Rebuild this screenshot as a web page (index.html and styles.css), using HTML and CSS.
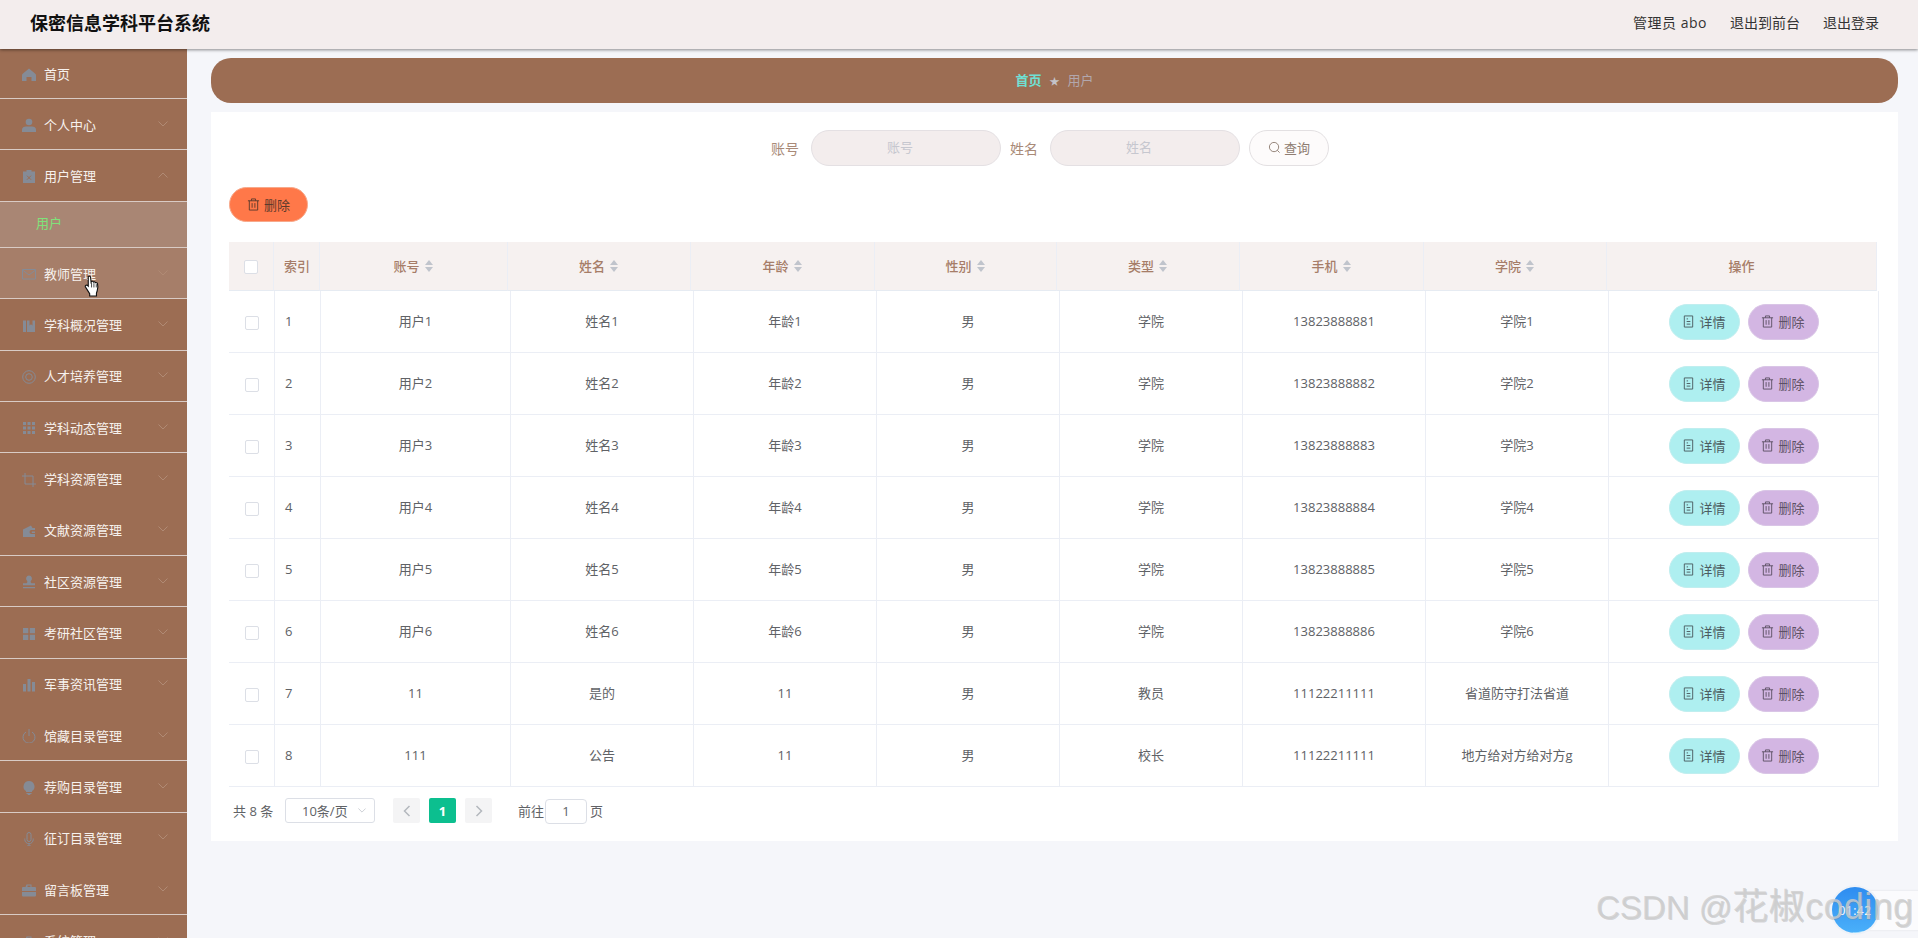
FILE: index.html
```html
<!DOCTYPE html>
<html lang="zh">
<head>
<meta charset="utf-8">
<title>保密信息学科平台系统</title>
<link rel="stylesheet" href="styles.css">
</head>
<body>
<svg class="defs" aria-hidden="true">
  <symbol id="i-chev" viewBox="0 0 10 6"><path d="M.5.5 5 5 9.500.5" fill="none" stroke="currentColor"/></symbol>
  <symbol id="i-chev-up" viewBox="0 0 10 6"><path d="M.5 5.500 5 1l4.500 4.500" fill="none" stroke="currentColor"/></symbol>
  <symbol id="i-trash" viewBox="0 0 14 14"><path d="M1 3h12M4.800 3V1h4.400v2M2.500 3v10h9V3M5.500 5.500v5M8.500 5.500v5" fill="none" stroke="currentColor" stroke-width="1"/></symbol>
  <symbol id="i-doc" viewBox="0 0 14 14"><path d="M2.500 1h9v12h-9zM5 7h4M5 9.800h4M5 4.200h1.500" fill="none" stroke="currentColor" stroke-width="1"/></symbol>
  <symbol id="i-search" viewBox="0 0 14 14"><circle cx="6.500" cy="6.500" r="5" fill="none" stroke="currentColor"/><path d="m10 10 2.500 2.500" stroke="currentColor"/></symbol>
</svg>

<header class="topbar">
  <div class="brand">保密信息学科平台系统</div>
  <nav class="toplinks">
    <span class="admin">管理员 abo</span>
    <span>退出到前台</span>
    <span>退出登录</span>
  </nav>
</header>

<div class="shell">
  <aside class="sidebar">
    <div class="menu-item first">
      <svg class="mi" viewBox="0 0 14 14"><path d="M7 1.500 13 6.500c.6.500 1 1 1 2V14H9.500V10h-5v4H0V8.500c0-1 .4-1.500 1-2z"/></svg>
      <span>首页</span>
    </div>
    <div class="menu-item">
      <svg class="mi" viewBox="0 0 14 14"><circle cx="7" cy="4" r="3.300"/><path d="M0 11.500C0 9.500 2 8.500 4 8.500h6c2 0 4 1 4 3V14H0z"/></svg>
      <span>个人中心</span><svg class="chev"><use href="#i-chev"/></svg>
    </div>
    <div class="menu-item open">
      <svg class="mi" viewBox="0 0 14 14"><path d="M1 2.500h3.500V1h5v1.500H13V14H1z"/><path d="m5 6.700 4 4M9 6.700l-4 4" stroke="#9c6d53" fill="none"/></svg>
      <span>用户管理</span><svg class="chev"><use href="#i-chev-up"/></svg>
    </div>
    <div class="submenu-item">用户</div>
    <div class="menu-item hovered">
      <svg class="mi" viewBox="0 0 14 14"><path d="M.5 2.500h13v9.500H.5zM.5 3 7 8l6.500-5" fill="none" stroke="currentColor"/></svg>
      <span>教师管理</span><svg class="chev"><use href="#i-chev"/></svg>
    </div>
    <div class="menu-item">
      <svg class="mi" viewBox="0 0 14 14"><path d="M1 1.500h3V13H1zM5 1.500h2.500v5l1.500-1.200 1.500 1.200v-5H13V13H5z"/></svg>
      <span>学科概况管理</span><svg class="chev"><use href="#i-chev"/></svg>
    </div>
    <div class="menu-item">
      <svg class="mi" viewBox="0 0 14 14"><circle cx="7" cy="7" r="6.300" fill="none" stroke="currentColor"/><circle cx="7" cy="7" r="3.300" fill="none" stroke="currentColor"/></svg>
      <span>人才培养管理</span><svg class="chev"><use href="#i-chev"/></svg>
    </div>
    <div class="menu-item">
      <svg class="mi" viewBox="0 0 14 14"><path d="M1 1h3v3H1zM5.500 1h3v3h-3zM10 1h3v3h-3zM1 5.500h3v3H1zM5.500 5.500h3v3h-3zM10 5.500h3v3h-3zM1 10h3v3H1zM5.500 10h3v3h-3zM10 10h3v3h-3z"/></svg>
      <span>学科动态管理</span><svg class="chev"><use href="#i-chev"/></svg>
    </div>
    <div class="menu-item plain">
      <svg class="mi" viewBox="0 0 14 14"><path d="M3 0v11h11M0 3h11v11" fill="none" stroke="currentColor"/></svg>
      <span>学科资源管理</span><svg class="chev"><use href="#i-chev"/></svg>
    </div>
    <div class="menu-item">
      <svg class="mi" viewBox="0 0 14 14"><path d="M1 5.500 9 1.500l1.500 2.500H13v2H9.500a2 2 0 0 0 0 4H13v3H1zM9.800 7.500H13v1.500H9.800z"/></svg>
      <span>文献资源管理</span><svg class="chev"><use href="#i-chev"/></svg>
    </div>
    <div class="menu-item">
      <svg class="mi" viewBox="0 0 14 14"><path d="M7 .500a3 3 0 0 1 2 5.200c-.5.500-.5 1.500 0 2l.5.500H13v2H1V8.200h3.500l.5-.5c.5-.5.5-1.500 0-2A3 3 0 0 1 7 .500zM1 12h12v1.300H1z"/></svg>
      <span>社区资源管理</span><svg class="chev"><use href="#i-chev"/></svg>
    </div>
    <div class="menu-item">
      <svg class="mi" viewBox="0 0 14 14"><path d="M1 1h5.300v5.300H1zM7.800 1H13v5.300H7.800zM1 7.800h5.300V13H1zM7.800 7.800H13V13H7.800z"/></svg>
      <span>考研社区管理</span><svg class="chev"><use href="#i-chev"/></svg>
    </div>
    <div class="menu-item plain">
      <svg class="mi" viewBox="0 0 14 14"><path d="M1 6h3v7.500H1zM5.500 1h3v12.500h-3zM10 4h3v9.500h-3z"/></svg>
      <span>军事资讯管理</span><svg class="chev"><use href="#i-chev"/></svg>
    </div>
    <div class="menu-item">
      <svg class="mi" viewBox="0 0 14 14"><path d="M4 3a6 6 0 1 0 6 0M7 0v7" fill="none" stroke="currentColor"/></svg>
      <span>馆藏目录管理</span><svg class="chev"><use href="#i-chev"/></svg>
    </div>
    <div class="menu-item">
      <svg class="mi" viewBox="0 0 14 14"><path d="M7 0a5.500 5.500 0 0 1 3 10.100V11H4v-.9A5.500 5.500 0 0 1 7 0zM4.500 12h5v1h-1l-.5 1H6l-.5-1h-1z"/></svg>
      <span>荐购目录管理</span><svg class="chev"><use href="#i-chev"/></svg>
    </div>
    <div class="menu-item plain">
      <svg class="mi" viewBox="0 0 14 14"><path d="M5 2.500a2 2 0 0 1 4 0v5a2 2 0 0 1-4 0zM2.800 6.500v1a4.200 4.200 0 0 0 8.400 0v-1M7 11.700V14M5 14h4" fill="none" stroke="currentColor"/></svg>
      <span>征订目录管理</span><svg class="chev"><use href="#i-chev"/></svg>
    </div>
    <div class="menu-item">
      <svg class="mi" viewBox="0 0 14 14"><path d="M4.500 1.500h5V4H13a1 1 0 0 1 1 1v3H0V5a1 1 0 0 1 1-1h2.500zM5.500 2.500V4h3V2.500zM0 9h14v3.500a1 1 0 0 1-1 1H1a1 1 0 0 1-1-1z" fill-rule="evenodd"/></svg>
      <span>留言板管理</span><svg class="chev"><use href="#i-chev"/></svg>
    </div>
    <div class="menu-item">
      <svg class="mi" viewBox="0 0 14 14"><path d="M4.500 1.500h5V4H13a1 1 0 0 1 1 1v3H0V5a1 1 0 0 1 1-1h2.500zM5.500 2.500V4h3V2.500zM0 9h14v3.500a1 1 0 0 1-1 1H1a1 1 0 0 1-1-1z" fill-rule="evenodd"/></svg>
      <span>系统管理</span><svg class="chev"><use href="#i-chev"/></svg>
    </div>
  </aside>

  <main class="main">
    <div class="crumbs">
      <span class="crumb-home">首页</span>
      <span class="crumb-sep">★</span>
      <span class="crumb-cur">用户</span>
    </div>

    <section class="card">
      <form class="filters">
        <label class="f-label">账号</label>
        <input class="f-input" placeholder="账号">
        <label class="f-label">姓名</label>
        <input class="f-input" placeholder="姓名">
        <button class="f-btn" type="button"><svg class="ico"><use href="#i-search"/></svg>查询</button>
      </form>

      <div class="actions">
        <button class="btn btn-del-top" type="button"><svg class="ico"><use href="#i-trash"/></svg>删除</button>
      </div>

      <table class="grid grid-head">
        <colgroup><col class="h1"><col class="h2"><col class="h3"><col class="h4"><col class="h5"><col class="h6"><col class="h7"><col class="h8"><col class="h9"><col class="h10"></colgroup>
        <thead>
          <tr>
            <th><span class="cb cb-head"></span></th>
            <th class="idx">索引</th>
            <th>账号<i class="sort"></i></th>
            <th>姓名<i class="sort"></i></th>
            <th>年龄<i class="sort"></i></th>
            <th>性别<i class="sort"></i></th>
            <th>类型<i class="sort"></i></th>
            <th>手机<i class="sort"></i></th>
            <th>学院<i class="sort"></i></th>
            <th>操作</th>
          </tr>
        </thead>
      </table>
      <table class="grid grid-body">
        <colgroup><col class="b1"><col class="b2"><col class="b3"><col class="b4"><col class="b4"><col class="b4"><col class="b4"><col class="b4"><col class="b4"><col class="b10"></colgroup>
        <tbody>
          <tr><td class="sel"><span class="cb"></span></td><td class="idx">1</td><td>用户1</td><td>姓名1</td><td>年龄1</td><td>男</td><td>学院</td><td>13823888881</td><td>学院1</td><td class="ops"><button class="btn btn-info" type="button"><svg class="ico"><use href="#i-doc"/></svg>详情</button><button class="btn btn-del" type="button"><svg class="ico"><use href="#i-trash"/></svg>删除</button></td></tr>
          <tr><td class="sel"><span class="cb"></span></td><td class="idx">2</td><td>用户2</td><td>姓名2</td><td>年龄2</td><td>男</td><td>学院</td><td>13823888882</td><td>学院2</td><td class="ops"><button class="btn btn-info" type="button"><svg class="ico"><use href="#i-doc"/></svg>详情</button><button class="btn btn-del" type="button"><svg class="ico"><use href="#i-trash"/></svg>删除</button></td></tr>
          <tr><td class="sel"><span class="cb"></span></td><td class="idx">3</td><td>用户3</td><td>姓名3</td><td>年龄3</td><td>男</td><td>学院</td><td>13823888883</td><td>学院3</td><td class="ops"><button class="btn btn-info" type="button"><svg class="ico"><use href="#i-doc"/></svg>详情</button><button class="btn btn-del" type="button"><svg class="ico"><use href="#i-trash"/></svg>删除</button></td></tr>
          <tr><td class="sel"><span class="cb"></span></td><td class="idx">4</td><td>用户4</td><td>姓名4</td><td>年龄4</td><td>男</td><td>学院</td><td>13823888884</td><td>学院4</td><td class="ops"><button class="btn btn-info" type="button"><svg class="ico"><use href="#i-doc"/></svg>详情</button><button class="btn btn-del" type="button"><svg class="ico"><use href="#i-trash"/></svg>删除</button></td></tr>
          <tr><td class="sel"><span class="cb"></span></td><td class="idx">5</td><td>用户5</td><td>姓名5</td><td>年龄5</td><td>男</td><td>学院</td><td>13823888885</td><td>学院5</td><td class="ops"><button class="btn btn-info" type="button"><svg class="ico"><use href="#i-doc"/></svg>详情</button><button class="btn btn-del" type="button"><svg class="ico"><use href="#i-trash"/></svg>删除</button></td></tr>
          <tr><td class="sel"><span class="cb"></span></td><td class="idx">6</td><td>用户6</td><td>姓名6</td><td>年龄6</td><td>男</td><td>学院</td><td>13823888886</td><td>学院6</td><td class="ops"><button class="btn btn-info" type="button"><svg class="ico"><use href="#i-doc"/></svg>详情</button><button class="btn btn-del" type="button"><svg class="ico"><use href="#i-trash"/></svg>删除</button></td></tr>
          <tr><td class="sel"><span class="cb"></span></td><td class="idx">7</td><td>11</td><td>是的</td><td>11</td><td>男</td><td>教员</td><td>11122211111</td><td>省道防守打法省道</td><td class="ops"><button class="btn btn-info" type="button"><svg class="ico"><use href="#i-doc"/></svg>详情</button><button class="btn btn-del" type="button"><svg class="ico"><use href="#i-trash"/></svg>删除</button></td></tr>
          <tr><td class="sel"><span class="cb"></span></td><td class="idx">8</td><td>111</td><td>公告</td><td>11</td><td>男</td><td>校长</td><td>11122211111</td><td>地方给对方给对方g</td><td class="ops"><button class="btn btn-info" type="button"><svg class="ico"><use href="#i-doc"/></svg>详情</button><button class="btn btn-del" type="button"><svg class="ico"><use href="#i-trash"/></svg>删除</button></td></tr>
        </tbody>
      </table>

      <div class="pager">
        <span class="p-total">共 8 条</span>
        <span class="p-size">10条/页<svg class="p-chev"><use href="#i-chev"/></svg></span>
        <span class="p-nav"><svg viewBox="0 0 8 12"><path d="M6.500 1 1.500 6l5 5" fill="none" stroke="currentColor" stroke-width="1.500"/></svg></span>
        <span class="p-cur">1</span>
        <span class="p-nav"><svg viewBox="0 0 8 12"><path d="m1.500 1 5 5-5 5" fill="none" stroke="currentColor" stroke-width="1.500"/></svg></span>
        <span class="p-goto">前往</span>
        <span class="p-jump">1</span>
        <span class="p-page">页</span>
      </div>
    </section>
  </main>
</div>

<svg class="cursor" viewBox="0 0 18 24"><path d="M4.500 1.500c1-.8 2.300-.3 2.500 1l.5 5 .5-.8c.8-.5 1.700-.3 2 .6.800-.5 1.700-.3 2 .6 1-.4 2 .1 2.300 1.100.5 2 .5 5-.3 7.500l-.8 2.500v3H6v-2.500L1.800 13c-.8-1-.5-2 .3-2.300.8-.3 1.700 0 2.400.8z" fill="#fff" stroke="#111" stroke-width="1.200"/><path d="M8 8v5M10.500 8.500V13M13 9.500V13" stroke="#111" stroke-width=".8" fill="none"/></svg>

<div class="recorder-pill"></div>
<div class="recorder"><span>01:42</span></div>
<div class="watermark">CSDN @<span class="wm-big">花椒coding</span></div>
</body>
</html>
```

FILE: styles.css
```css
* { box-sizing: border-box; }
html, body { margin: 0; height: 938px; overflow: hidden; }
body {
  font-family: "Open Sans", "Noto Sans CJK SC", sans-serif;
  font-size: 13px;
  color: #606266;
  background: #f5f6fa;
}
.defs { width: 0; height: 0; display: block; }

.topbar {
  position: relative;
  z-index: 2;
  height: 49px;
  background: #f3eded;
  box-shadow: 0 1px 3px rgba(0, 0, 0, .45);
  display: flex;
  align-items: center;
  justify-content: space-between;
  padding: 0 39px 5px 30px;
}
.brand { font-size: 18px; font-weight: 700; color: #111; }
.toplinks { display: flex; gap: 23px; font-size: 14px; color: #333; }
.admin { letter-spacing: .5px; }

.shell { display: flex; height: 889px; }

.sidebar { width: 187px; flex: none; background: #9c6d53; overflow: hidden; }
.menu-item {
  height: 51.33px;
  display: flex;
  align-items: center;
  padding-left: 22px;
  gap: 8px;
  color: #f7f2ee;
  font-size: 13px;
  border-bottom: 1px solid #d9cbc5;
}
.menu-item.first { height: 50px; padding-bottom: 1px; }
.menu-item.plain { border-bottom-color: transparent; }
.menu-item.hovered { background: #a67e69; }
.menu-item span { flex: 1; }
.mi { width: 14px; height: 14px; flex: none; fill: #858b96; color: #858b96; margin-top: 2px; }
.chev { width: 10px; height: 6px; flex: none; color: #b08a74; margin-right: 19px; margin-top: -1px; }
.submenu-item {
  height: 46.5px;
  padding: 0 0 3px 36px;
  display: flex;
  align-items: center;
  color: #7fe27a;
  background: #a98674;
  border-bottom: 1px solid #d9cbc5;
}

.main { flex: 1; padding: 9px 20px 0 24px; }
.crumbs {
  height: 45px;
  border-radius: 20px;
  background: #9c6d53;
  display: flex;
  align-items: center;
  justify-content: center;
  gap: 8px;
  font-size: 13px;
  padding-bottom: 2px;
}
.crumb-home { color: #6fe0d4; font-weight: 700; }
.crumb-sep { color: #c3c3c9; font-size: 10px; padding-top: 2px; }
.crumb-cur { color: #b2a7ad; }

.card {
  margin-top: 9px;
  height: 729px;
  background: #fff;
  padding: 18px 0 0 18px;
}
.filters { display: flex; align-items: center; justify-content: center; height: 36px; padding-right: 27px; }
.f-label { font-size: 14px; color: #a98a78; margin-right: 12px; }
.f-input {
  width: 190px;
  height: 36px;
  border-radius: 18px;
  border: 1px solid #e4e0e3;
  background: #f3eded;
  text-align: center;
  font: 13px "Open Sans", "Noto Sans CJK SC", sans-serif;
  padding: 0 22px 2px 10px;
  margin-right: 9px;
  outline: none;
}
.f-input::placeholder { color: #c6c7cf; }
.f-btn {
  width: 80px;
  height: 36px;
  border-radius: 18px;
  border: 1px solid #e3e0e2;
  background: #fdfbfb;
  color: #8f7d72;
  font: 13px "Open Sans", "Noto Sans CJK SC", sans-serif;
  display: flex;
  align-items: center;
  justify-content: center;
  gap: 3px;
  padding: 0 0 2px;
}
.ico { width: 13px; height: 13px; flex: none; }

.actions { margin-top: 21px; height: 55px; }
.btn {
  height: 36px;
  border-radius: 18px;
  border: 1px solid #dde2e6;
  display: inline-flex;
  align-items: center;
  justify-content: center;
  gap: 4px;
  padding: 0;
  font: 13px "Open Sans", "Noto Sans CJK SC", sans-serif;
}
.btn-del-top { width: 79px; height: 35px; background: #ff7849; color: #5c3a2c; border-color: #f7a98b; }
.btn-info { width: 71px; background: #aeeff0; color: #4b5c60; border-color: #c0eeef; }
.btn-del { width: 71px; background: #d3b6e3; color: #5d5165; border-color: #d9c5e6; margin-left: 8px; }

.grid { border-collapse: separate; border-spacing: 0; table-layout: fixed; }
.grid-head { width: 1648px; background: #f6f1f0; }
.grid-body { width: 1650px; }
.h1 { width: 45px; } .h2 { width: 46px; } .h3 { width: 188px; } .h4 { width: 183px; } .h5 { width: 184px; }
.h6 { width: 182px; } .h7 { width: 183px; } .h8 { width: 184px; } .h9 { width: 183px; } .h10 { width: 270px; }
.b1 { width: 46px; } .b2 { width: 46px; } .b3 { width: 190px; } .b4 { width: 183px; } .b10 { width: 270px; }

th {
  height: 49px;
  padding: 0 0 2px;
  font-size: 13px;
  font-weight: 500;
  color: #a67d68;
  text-align: center;
  border-right: 1px solid #ebeef5;
  border-bottom: 1px solid #e6ebf2;
}
td {
  height: 62px;
  padding: 0 0 2px;
  text-align: center;
  color: #606266;
  border-right: 1px solid #ebeef5;
  border-bottom: 1px solid #ebeef5;
}
td.sel, td.ops { padding-bottom: 0; }
th.idx, td.idx { text-align: left; padding-left: 10px; }
.cb {
  display: inline-block;
  width: 14px;
  height: 14px;
  border: 1px solid #dcdfe6;
  border-radius: 2px;
  background: #fff;
  vertical-align: middle;
}
.sort {
  display: inline-block;
  width: 9px;
  height: 12px;
  margin-left: 5px;
  vertical-align: -1px;
}
.sort::before, .sort::after {
  content: "";
  display: block;
  width: 0;
  height: 0;
  border-left: 4.500px solid transparent;
  border-right: 4.500px solid transparent;
}
.sort::before { border-bottom: 5px solid #c0c4cc; }
.sort::after { border-top: 5px solid #c0c4cc; margin-top: 2px; }
.ops { white-space: nowrap; }

.pager { display: flex; align-items: center; height: 25px; margin-top: 11px; padding-left: 4px; font-size: 13px; color: #606266; }
.p-total { width: 52px; }
.p-size {
  width: 90px;
  height: 25px;
  border: 1px solid #dcdfe6;
  border-radius: 3px;
  display: flex;
  align-items: center;
  justify-content: space-between;
  padding: 0 8px 0 16px;
  margin-right: 18px;
}
.p-chev { width: 8px; height: 5px; color: #c0c4cc; }
.p-nav {
  width: 27px;
  height: 25px;
  background: #f4f4f5;
  border-radius: 2px;
  display: flex;
  align-items: center;
  justify-content: center;
  color: #b4b8be;
}
.p-nav svg { width: 8px; height: 12px; }
.p-cur {
  width: 27px;
  height: 25px;
  margin: 0 9px;
  border-radius: 2px;
  background: #0cbf8f;
  color: #fff;
  font-weight: 700;
  display: flex;
  align-items: center;
  justify-content: center;
}
.p-goto { margin-left: 26px; width: 27px; }
.p-jump {
  width: 42px;
  height: 25px;
  margin-top: 1px;
  border: 1px solid #dcdfe6;
  border-radius: 4px;
  display: flex;
  align-items: center;
  justify-content: center;
}
.p-page { margin-left: 3px; }

.cursor { position: absolute; left: 84px; top: 275px; width: 17px; height: 23px; z-index: 3; }
.recorder-pill {
  position: absolute;
  left: 1865px;
  top: 891px;
  width: 60px;
  height: 39px;
  background: #fbfbfd;
  border-radius: 4px 0 0 4px;
  box-shadow: 0 0 3px rgba(0, 0, 0, .08);
}
.recorder {
  position: absolute;
  left: 1832px;
  top: 887px;
  width: 46px;
  height: 46px;
  border-radius: 50%;
  background:
    radial-gradient(ellipse 34px 14px at 70% 118%, #8fd6ff 0 70%, transparent 72%),
    linear-gradient(180deg, #2e8cf0, #4ab0fa);
  box-shadow: 0 0 0 2px #eef2f8;
  color: #fff;
  font-size: 12px;
  letter-spacing: .5px;
  display: flex;
  align-items: center;
  justify-content: center;
}
.watermark {
  position: absolute;
  left: 1596px;
  top: 884px;
  width: 340px;
  white-space: nowrap;
  font-family: "Liberation Sans", "Noto Sans CJK SC", sans-serif;
  font-size: 33px;
  line-height: 46px;
  color: rgba(205, 205, 205, .8);
  text-shadow: 1px 1px 0 rgba(130, 130, 130, .3);
}
.wm-big { font-size: 36px; letter-spacing: .4px; }
```
